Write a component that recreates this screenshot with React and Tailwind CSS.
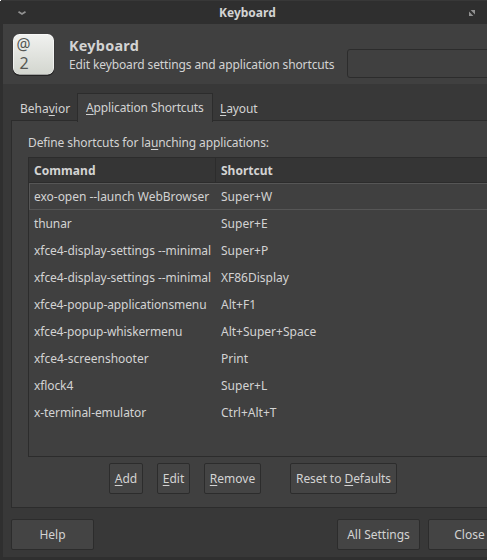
const SHORTCUTS = [
  ["exo-open --launch WebBrowser", "Super+W", "tracking-[-0.03px]"],
  ["thunar", "Super+E", "tracking-[-0.1px]"],
  ["xfce4-display-settings --minimal", "Super+P", "tracking-[-0.05px]"],
  ["xfce4-display-settings --minimal", "XF86Display", "tracking-[-0.05px]"],
  ["xfce4-popup-applicationsmenu", "Alt+F1", "tracking-[-0.1px]"],
  ["xfce4-popup-whiskermenu", "Alt+Super+Space", "tracking-[-0.12px]"],
  ["xfce4-screenshooter", "Print", "tracking-normal"],
  ["xflock4", "Super+L", "tracking-[-0.1px]"],
  ["x-terminal-emulator", "Ctrl+Alt+T", "tracking-[-0.07px]"],
];

function Key({ children }) {
  return (
    <span className="underline decoration-1 underline-offset-2 [text-decoration-skip-ink:none]">
      {children}
    </span>
  );
}

function Button({ className, children }) {
  return (
    <button
      className={`h-[31px] shrink-0 rounded-[2px] border border-[#2c2c2c] bg-[#444444] text-center leading-[29px] ${className}`}
    >
      {children}
    </button>
  );
}

function TitleBar() {
  return (
    <div className="relative flex h-6 shrink-0 items-center border-t border-[#383838] bg-[#2f2f2f]">
      <span className="absolute -top-px left-0 h-px w-px bg-white" />
      <svg className="ml-[18px] mt-px h-[5px] w-2 shrink-0" viewBox="0 0 8 5">
        <path d="M0.5 0.8L4 3L7.5 0.8" fill="none" stroke="#929292" strokeWidth="1.8" />
      </svg>
      <div className="ml-[193px] w-[80px] text-[12px] font-bold leading-[23px]">Keyboard</div>
      <svg className="ml-[170px] h-[6px] w-[6px] shrink-0" viewBox="0 0 6 6">
        <path d="M1.6 0H6V4.4ZM0 1.6V6H4.4Z" fill="#929292" />
      </svg>
    </div>
  );
}

function KeycapIcon() {
  return (
    <svg className="h-[44px] w-[44px] shrink-0" viewBox="0 0 44 44">
      <defs>
        <linearGradient id="cap" x1="0" y1="0" x2="0" y2="1">
          <stop offset="0" stopColor="#f0f1ef" />
          <stop offset="1" stopColor="#d3d6cf" />
        </linearGradient>
      </defs>
      <rect x="0.8" y="1.5" width="41.4" height="41.5" rx="7" fill="#242424" />
      <rect x="1" y="1" width="41" height="40.5" rx="6.5" fill="#fafafa" />
      <rect x="1.7" y="1.8" width="39.6" height="39.5" rx="6" fill="url(#cap)" />
      <text x="4.6" y="17" fontFamily="Noto Sans, sans-serif" fontSize="16" fill="#555753" textLength="14" lengthAdjust="spacingAndGlyphs">@</text>
      <text x="7.4" y="36" fontFamily="Noto Sans, sans-serif" fontSize="16" fill="#555753">2</text>
    </svg>
  );
}

function Header() {
  return (
    <div className="flex h-[60px] shrink-0 bg-[#404040] pl-[9px] pt-[9px]">
      <KeycapIcon />
      <div className="ml-[13px] w-[278px] shrink-0 pt-[3px]">
        <div className="text-[14.4px] font-bold leading-[20px] tracking-[0.25px]">Keyboard</div>
        <div className="leading-[17px] tracking-[-0.12px]">Edit keyboard settings and application shortcuts</div>
      </div>
      <div className="mt-4 h-[29px] w-[180px] shrink-0 rounded-[3px] border border-[#2c2c2c] bg-[#404040]" />
    </div>
  );
}

function Tabs() {
  return (
    <div className="relative z-10 flex h-[37px] shrink-0 items-end">
      <div className="ml-[17px] w-[57px] leading-[25px]">Beha<Key>v</Key>ior</div>
      <div className="-mb-px h-[29px] w-[136px] border border-b-0 border-[#2c2c2c] bg-[#404040] pl-[8px] leading-[27px] tracking-[-0.12px]">
        <Key>A</Key>pplication Shortcuts
      </div>
      <div className="ml-[7px] leading-[25px] tracking-[-0.1px]"><Key>L</Key>ayout</div>
    </div>
  );
}

function ShortcutTable() {
  return (
    <div className="mt-[5px] h-[300px] border border-r-0 border-[#2c2c2c] bg-[#404040]">
      <div className="flex h-[25px] border-b border-[#2c2c2c] bg-[#353535] font-bold leading-[25px]">
        <div className="w-[187px] border-r border-[#2c2c2c] pl-[5px] tracking-[0.05px]">Command</div>
        <div className="pl-[5px]">Shortcut</div>
      </div>
      {SHORTCUTS.map(([command, shortcut, tracking], i) => (
        <div
          key={i}
          className={`flex h-[27px] border pl-[4px] leading-[25px] ${
            i === 0 ? "border-r-0 border-[#565656]" : "border-transparent"
          }`}
        >
          <div className={`w-[187px] ${tracking}`}>{command}</div>
          <div>{shortcut}</div>
        </div>
      ))}
    </div>
  );
}

export default function App() {
  return (
    <div className="flex h-[560px] w-[487px] flex-col overflow-hidden whitespace-nowrap bg-[#2f2f2f] font-['Noto_Sans',sans-serif] text-[12px] text-[#d3d3d3]">
      <TitleBar />
      <div className="ml-[3px] flex h-[533px] shrink-0 flex-col overflow-hidden bg-[#383838]">
        <Header />
        <Tabs />
        <div className="-mt-px ml-2 h-[388px] shrink-0 border border-r-0 border-[#2c2c2c] bg-[#404040] pl-4 pt-[13px]">
          <div className="leading-[18px] tracking-[-0.11px]">Define shortcuts for la<Key>u</Key>nching applications:</div>
          <ShortcutTable />
          <div className="ml-[81px] mt-[6px] flex">
            <Button className="w-[34px]"><Key>A</Key>dd</Button>
            <Button className="ml-[14px] w-[33px]"><Key>E</Key>dit</Button>
            <Button className="ml-[14px] w-[57px]"><Key>R</Key>emove</Button>
            <Button className="ml-[29px] w-[107px] tracking-[-0.05px]">Reset to <Key>D</Key>efaults</Button>
          </div>
        </div>
        <div className="ml-2 mt-[11px] flex">
          <Button className="w-[83px]">Help</Button>
          <Button className="ml-[243px] w-[83px]">All Settings</Button>
          <Button className="ml-2 w-[83px]">Close</Button>
        </div>
      </div>
    </div>
  );
}
